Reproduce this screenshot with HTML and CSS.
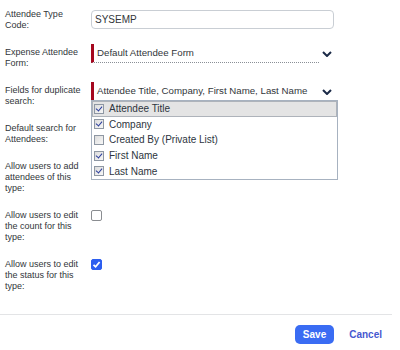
FILE: index.html
```html
<!DOCTYPE html>
<html lang="en">
<head>
  <meta charset="UTF-8">
  <title>Attendee Type</title>
  <link rel="stylesheet" href="styles.css">
</head>
<body>

  <div class="form">
    <div class="row">
      <div class="label">Attendee Type Code:</div>
      <div class="control"><input class="text-input" type="text" value="SYSEMP"></div>
    </div>

    <div class="row">
      <div class="label">Expense Attendee Form:</div>
      <div class="control">
        <div class="select">
          <div class="select-value dotted">Default Attendee Form</div>
          <svg class="chevron" width="10" height="6" viewBox="0 0 10 6"><polyline points="1,1 5,5 9,1" fill="none" stroke="#1b2a47" stroke-width="2"/></svg>
        </div>
      </div>
    </div>

    <div class="row">
      <div class="label">Fields for duplicate search:</div>
      <div class="control">
        <div class="select">
          <div class="select-value">Attendee Title, Company, First Name, Last Name</div>
          <svg class="chevron" width="10" height="6" viewBox="0 0 10 6"><polyline points="1,1 5,5 9,1" fill="none" stroke="#1b2a47" stroke-width="2"/></svg>
        </div>
        <ul class="menu">
          <li class="menu-item active"><span class="mini-check on"></span>Attendee Title</li>
          <li class="menu-item"><span class="mini-check on"></span>Company</li>
          <li class="menu-item"><span class="mini-check"></span>Created By (Private List)</li>
          <li class="menu-item"><span class="mini-check on"></span>First Name</li>
          <li class="menu-item"><span class="mini-check on"></span>Last Name</li>
        </ul>
      </div>
    </div>

    <div class="row">
      <div class="label">Default search for Attendees:</div>
      <div class="control"></div>
    </div>

    <div class="row">
      <div class="label">Allow users to add attendees of this type:</div>
      <div class="control"></div>
    </div>

    <div class="row">
      <div class="label">Allow users to edit the count for this type:</div>
      <div class="control"><span class="checkbox"></span></div>
    </div>

    <div class="row">
      <div class="label">Allow users to edit the status for this type:</div>
      <div class="control">
        <span class="checkbox checked">
          <svg width="9" height="9" viewBox="0 0 9 9"><polyline points="1.5,4.8 3.6,6.8 7.6,2" fill="none" stroke="#fff" stroke-width="1.8"/></svg>
        </span>
      </div>
    </div>
  </div>

  <div class="footer">
    <button class="save">Save</button>
    <a class="cancel" href="#">Cancel</a>
  </div>

</body>
</html>
```

FILE: styles.css
```css
body {
  margin: 0;
  font-family: 'Liberation Sans', Arial, sans-serif;
  color: #32363a;
  background: #fff;
}

.form {
  padding-top: 9px;
}

.row {
  display: grid;
  grid-template-columns: 91px 247px;
  margin-bottom: 16px;
}

.label {
  padding-left: 5px;
  padding-right: 2px;
  font-size: 9px;
  line-height: 11px;
}

.control {
  position: relative;
}

.text-input {
  box-sizing: border-box;
  width: 243px;
  height: 19px;
  margin: -3px 0 0;
  padding: 0 3px;
  border: 1px solid #c9ced4;
  border-radius: 4px;
  font-family: inherit;
  font-size: 10px;
  color: #32363a;
  outline: none;
}

.select {
  display: flex;
  align-items: center;
  width: 243px;
  margin-top: -3px;
}

.select-value {
  flex: 1;
  height: 19px;
  line-height: 18px;
  padding-left: 3px;
  border-left: 3px solid #a5081f;
  font-size: 9.7px;
  white-space: nowrap;
}

.select-value.dotted {
  border-bottom: 1px dotted #8a8f96;
  box-sizing: border-box;
}

.chevron {
  margin: 0 2px 0 3px;
}

.menu {
  position: absolute;
  left: 0;
  top: 15px;
  width: 245px;
  margin: 0;
  padding: 0;
  list-style: none;
  border: 1px solid #a7b2c0;
  background: #fff;
}

.menu-item {
  display: flex;
  align-items: center;
  height: 15.6px;
  padding-left: 2px;
  font-size: 10px;
  color: #2d3540;
  box-sizing: border-box;
}

.menu-item.active {
  background: #e4e4e4;
  border: 1px solid #aeb3ba;
  padding-left: 1px;
}

.mini-check {
  position: relative;
  box-sizing: border-box;
  width: 10px;
  height: 10px;
  margin-right: 5px;
  border: 1px solid #8e97a3;
  background: linear-gradient(135deg, #dcdcdc, #f7f7f7);
}

.mini-check.on::after {
  content: "";
  position: absolute;
  left: 2px;
  top: 0px;
  width: 3px;
  height: 5px;
  border: solid #2a3d9c;
  border-width: 0 1.5px 1.5px 0;
  transform: rotate(40deg);
}

.checkbox {
  display: flex;
  align-items: center;
  justify-content: center;
  box-sizing: border-box;
  width: 11px;
  height: 11px;
  border: 1px solid #8a8d91;
  border-radius: 2px;
  background: #fff;
}

.checkbox.checked {
  border-color: #2c5ef0;
  background: #2c5ef0;
}

.footer {
  display: flex;
  justify-content: flex-end;
  align-items: center;
  gap: 15px;
  margin-top: 22px;
  margin-right: 8px;
  padding: 10px 10px 0 0;
  border-top: 1px solid #e3e4e6;
}

.save {
  height: 19px;
  padding: 0 8px;
  border: none;
  border-radius: 5px;
  background: #3a6cf3;
  color: #fff;
  font-family: inherit;
  font-size: 10px;
  font-weight: bold;
}

.cancel {
  color: #4658d0;
  font-size: 10px;
  font-weight: bold;
  text-decoration: none;
}
```
